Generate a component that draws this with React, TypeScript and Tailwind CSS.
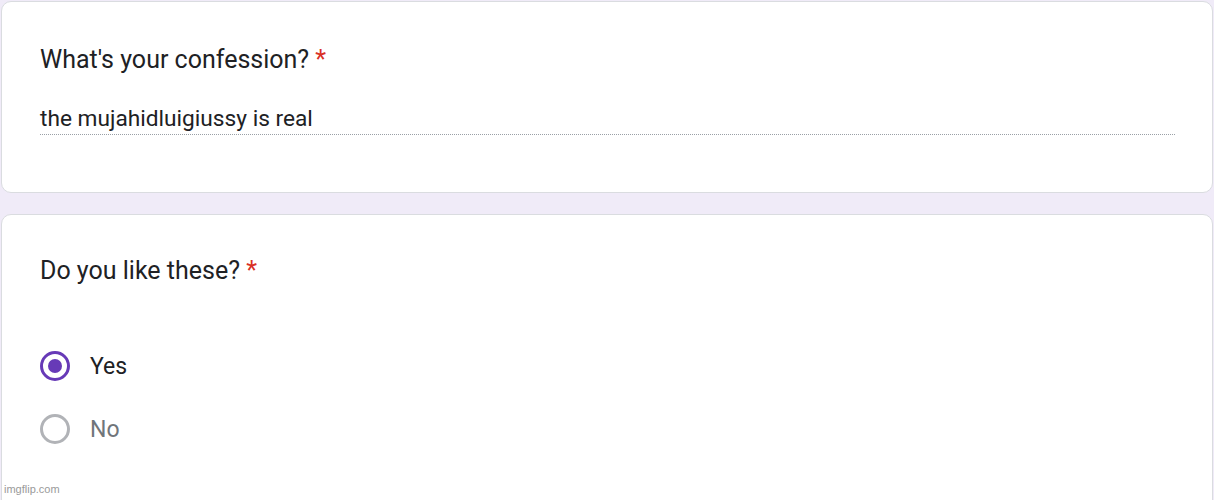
import React from 'react';

const Radio = ({ checked }: { checked: boolean }) =>
  checked ? (
    <span className="flex w-[30px] h-[30px] rounded-full border-[3px] border-[#673ab7] items-center justify-center">
      <span className="w-[14px] h-[14px] rounded-full bg-[#673ab7]" />
    </span>
  ) : (
    <span className="block w-[30px] h-[30px] rounded-full border-[3px] border-[#b1b3b7]" />
  );

export default function App() {
  return (
    <div
      className="w-[1214px] h-[500px] overflow-hidden bg-[#f0ebf8] relative px-px pt-px"
      style={{ fontFamily: 'Roboto, "Liberation Sans", sans-serif' }}
    >
      <div className="bg-white border border-[#dadce0] rounded-[10px] h-[192px] pl-[38px] pr-[37px] pt-[41px]">
        <h2 className="text-[25px] leading-[34px] text-[#202124]">
          What's your confession? <span className="text-[#d93025]">*</span>
        </h2>
        <div className="mt-[27px] text-[22.7px] leading-[30px] text-[#202124] border-b border-dotted border-[#9aa0a6]">
          the mujahidluigiussy is real
        </div>
      </div>

      <div className="mt-[21px] bg-white border border-[#dadce0] rounded-[10px] h-[320px] pl-[38px] pt-[39px]">
        <h2 className="text-[25px] leading-[34px] text-[#202124]">
          Do you like these? <span className="text-[#d93025]">*</span>
        </h2>
        <div className="mt-[63px] flex flex-col gap-[33px]">
          <label className="flex items-center gap-[20px] h-[30px]">
            <Radio checked />
            <span className="text-[23px] leading-none text-[#202124]">Yes</span>
          </label>
          <label className="flex items-center gap-[20px] h-[30px]">
            <Radio checked={false} />
            <span className="text-[23px] leading-none text-[#70757a]">No</span>
          </label>
        </div>
      </div>

      <div className="absolute left-[4px] bottom-[3px] text-[11px] text-[#9a9a9a]" style={{ fontFamily: '"Liberation Sans", Arial, sans-serif' }}>
        imgflip.com
      </div>
    </div>
  );
}
